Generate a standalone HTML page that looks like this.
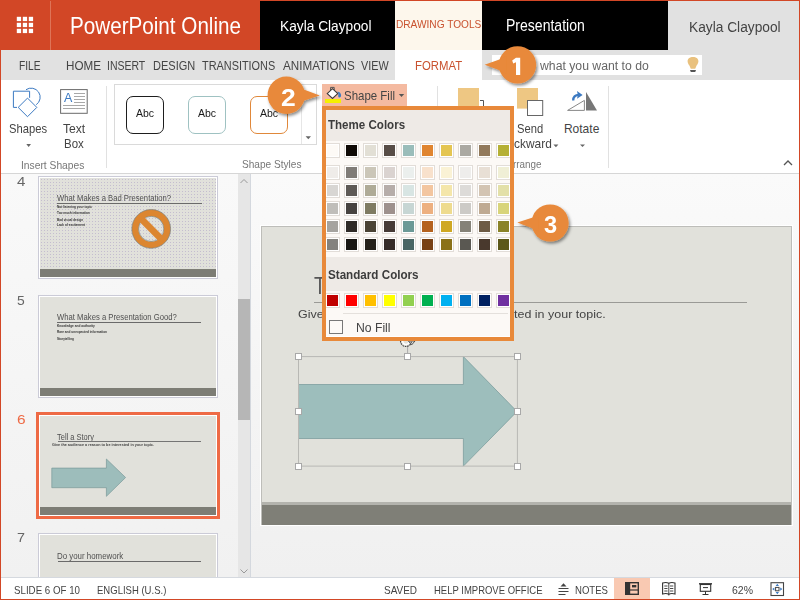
<!DOCTYPE html>
<html><head><meta charset="utf-8">
<style>
*{box-sizing:border-box;margin:0;padding:0}
html,body{width:800px;height:600px;overflow:hidden;background:#fff}
body{position:relative;font-family:"Liberation Sans",sans-serif}
.a{position:absolute}
.t{position:absolute;white-space:nowrap;line-height:1;transform-origin:0 0}
svg{position:absolute;overflow:visible}
.dot{background-color:#E2E1DB;background-image:radial-gradient(circle at 1.5px 1.5px,#C4BDCF 0.7px,transparent 1px);background-size:3px 3px}
</style></head><body>
<div class="a" style="left:0px;top:0px;width:260px;height:50px;background:#D24726;"></div>
<div class="a" style="left:50px;top:1px;width:1px;height:49px;background:#DE7458;"></div>
<svg style="left:16px;top:16px" width="18" height="18"><g fill="#fff"><rect x="0.8" y="0.8" width="4.3" height="4.3"/><rect x="0.8" y="6.8" width="4.3" height="4.3"/><rect x="0.8" y="12.8" width="4.3" height="4.3"/><rect x="6.8" y="0.8" width="4.3" height="4.3"/><rect x="6.8" y="6.8" width="4.3" height="4.3"/><rect x="6.8" y="12.8" width="4.3" height="4.3"/><rect x="12.8" y="0.8" width="4.3" height="4.3"/><rect x="12.8" y="6.8" width="4.3" height="4.3"/><rect x="12.8" y="12.8" width="4.3" height="4.3"/></g></svg>
<div class="t" style="left:70.35px;top:14.84px;font-size:23.19px;color:#fff;transform:scaleX(0.8905);">PowerPoint Online</div>
<div class="a" style="left:260px;top:0px;width:135px;height:50px;background:#000;"></div>
<div class="t" style="left:279.90px;top:19.21px;font-size:14.49px;color:#fff;transform:scaleX(0.9475);">Kayla Claypool</div>
<div class="a" style="left:395px;top:0px;width:87px;height:50px;background:#FDF7EC;"></div>
<div class="t" style="left:395.69px;top:18.78px;font-size:10.87px;color:#C9522F;transform:scaleX(0.9322);">DRAWING TOOLS</div>
<div class="a" style="left:482px;top:0px;width:186px;height:50px;background:#000;"></div>
<div class="t" style="left:506.28px;top:18.23px;font-size:15.65px;color:#fff;transform:scaleX(0.8970);">Presentation</div>
<div class="a" style="left:668px;top:0px;width:132px;height:50px;background:#E1E1E1;"></div>
<div class="t" style="left:689.30px;top:18.60px;font-size:15.22px;color:#444;transform:scaleX(0.9024);">Kayla Claypool</div>
<div class="a" style="left:0px;top:50px;width:800px;height:30px;background:#E1E1E1;"></div>
<div class="a" style="left:395px;top:50px;width:87px;height:30px;background:#fff;"></div>
<div class="t" style="left:19.48px;top:59.44px;font-size:13.04px;color:#444;transform:scaleX(0.7821);">FILE</div>
<div class="t" style="left:66.47px;top:59.44px;font-size:13.04px;color:#444;transform:scaleX(0.8944);">HOME</div>
<div class="t" style="left:107.46px;top:59.44px;font-size:13.04px;color:#444;transform:scaleX(0.8035);">INSERT</div>
<div class="t" style="left:152.52px;top:59.44px;font-size:13.04px;color:#444;transform:scaleX(0.8460);">DESIGN</div>
<div class="t" style="left:201.78px;top:59.44px;font-size:13.04px;color:#444;transform:scaleX(0.8352);">TRANSITIONS</div>
<div class="t" style="left:282.50px;top:59.44px;font-size:13.04px;color:#444;transform:scaleX(0.8955);">ANIMATIONS</div>
<div class="t" style="left:361.20px;top:59.44px;font-size:13.04px;color:#444;transform:scaleX(0.8284);">VIEW</div>
<div class="t" style="left:414.59px;top:59.74px;font-size:12.39px;color:#C9522F;transform:scaleX(0.9177);">FORMAT</div>
<div class="a" style="left:492px;top:55px;width:210px;height:20px;background:#fff;"></div>
<div class="t" style="left:539.60px;top:59.91px;font-size:12.61px;color:#666;transform:scaleX(0.9700);">what you want to do</div>
<svg style="left:0;top:0" width="800" height="600"><path d="M690.8 68.7 L695.2 68.7 L696.6 65.5 C697.8 64 698.4 62.6 698.4 61.2 C698.4 58.6 696.2 57 693 57 C689.8 57 687.6 58.6 687.6 61.2 C687.6 62.6 688.2 64 689.4 65.5 Z" fill="#E9C17E"/><path d="M690 70 L696 70 L695.2 72 L690.8 72 Z" fill="#555"/></svg>
<div class="a" style="left:0px;top:173px;width:800px;height:1px;background:#D6D6D6;"></div>
<svg style="left:0;top:0" width="800" height="600"><g fill="none" stroke="#3C7AC2" stroke-width="1"><path d="M29.6 97.8 V91.2 H13.4 V107.4 H17"/><path d="M26 89.7 A9 9 0 1 1 36.2 104.7"/><path d="M27.5 98.1 L36.8 107.4 L27.5 116.7 L18.2 107.4 Z"/></g></svg>
<div class="t" style="left:8.90px;top:122.80px;font-size:12.32px;color:#444;transform:scaleX(0.9099);">Shapes</div>
<svg style="left:0;top:0" width="800" height="600"><path d="M26.3 144 H31 L28.65 147 Z" fill="#666"/></svg>
<svg style="left:0;top:0" width="800" height="600"><rect x="60.6" y="89.6" width="26.6" height="23.7" fill="#fff" stroke="#6A6A6A" stroke-width="1"/><g stroke="#A8A8A8" stroke-width="1"><path d="M74 93.5 H85 M74 96.5 H85 M74 99.5 H85 M74 102.5 H85 M63 105.5 H85 M63 108.5 H85"/></g></svg>
<div class="t" style="left:63.90px;top:91.22px;font-size:13.19px;color:#3C7AC2;transform:scaleX(0.9464);">A</div>
<div class="t" style="left:62.86px;top:122.80px;font-size:12.32px;color:#444;transform:scaleX(0.9849);">Text</div>
<div class="t" style="left:63.83px;top:137.75px;font-size:12.68px;color:#444;transform:scaleX(0.9043);">Box</div>
<div class="t" style="left:20.98px;top:159.81px;font-size:11.30px;color:#777;transform:scaleX(0.9088);">Insert Shapes</div>
<div class="a" style="left:106px;top:86px;width:1px;height:82px;background:#E1E1E1;"></div>
<div class="a" style="left:114px;top:84px;width:203px;height:61px;border:1px solid #DADADA"></div>
<div class="a" style="left:301px;top:85px;width:1px;height:59px;background:#E6E6E6;"></div>
<svg style="left:0;top:0" width="800" height="600"><path d="M305.6 136.3 H311 L308.3 139.3 Z" fill="#666"/></svg>
<div class="a" style="left:126px;top:96px;width:38px;height:38px;border:1.6px solid #1E1E1E;border-radius:7px"></div>
<div class="a" style="left:188px;top:96px;width:38px;height:38px;border:1.5px solid #9FC2C2;border-radius:7px"></div>
<div class="a" style="left:250px;top:96px;width:38px;height:38px;border:1.5px solid #E0883A;border-radius:7px"></div>
<div class="t" style="left:136.20px;top:108.08px;font-size:10.87px;color:#1a1a1a;transform:scaleX(0.9687);">Abc</div>
<div class="t" style="left:198.10px;top:108.08px;font-size:10.87px;color:#1a1a1a;transform:scaleX(0.9687);">Abc</div>
<div class="t" style="left:260.10px;top:108.08px;font-size:10.87px;color:#1a1a1a;transform:scaleX(0.9687);">Abc</div>
<div class="t" style="left:242.25px;top:159.39px;font-size:11.45px;color:#777;transform:scaleX(0.8817);">Shape Styles</div>
<div class="a" style="left:322px;top:84px;width:85px;height:22px;background:#F4BAA1;"></div>
<svg style="left:0;top:0" width="800" height="600"><path d="M330.6 91.5 V87.4 H334.2 V90.5" fill="none" stroke="#555" stroke-width="1"/><path d="M327.2 93.6 L332.5 88.7 L337.8 93.6 L332.5 98.5 Z" fill="#fff" stroke="#3a3a3a" stroke-width="1.1"/><path d="M337.4 91.6 C339.6 91.8 341.1 93.6 341.1 95.6 C341.1 96.9 340.3 97.6 339.5 97.6 C338.6 97.6 338.2 96.9 338.2 96.1 L338.4 93.6 Z" fill="#3C7AC2"/><rect x="325" y="99" width="16" height="4" fill="#F5F000"/><path d="M398.8 94 H404.2 L401.5 97 Z" fill="#555"/></svg>
<div class="t" style="left:343.98px;top:89.44px;font-size:13.04px;color:#444;transform:scaleX(0.8799);">Shape Fill</div>
<div class="a" style="left:437px;top:86px;width:1px;height:82px;background:#E1E1E1;"></div>
<svg style="left:0;top:0" width="800" height="600"><rect x="458" y="88" width="21" height="21" fill="#EEC783"/><path d="M480 100.5 H483.5 V106" fill="none" stroke="#555" stroke-width="1"/><rect x="517" y="88" width="21" height="20.6" fill="#EEC783"/><rect x="527.5" y="100.5" width="15.2" height="15" fill="#fff" stroke="#666" stroke-width="1"/><path d="M567.6 110.4 L584.4 100.4 L584.4 110.4 Z" fill="#fff" stroke="#888" stroke-width="1"/><path d="M586 92 L586 110.4 L597 110.4 Z" fill="#777"/><path d="M573.2 100.6 C573.2 96.8 575.2 94.9 579 94.9" fill="none" stroke="#3C7AC2" stroke-width="2.3"/><path d="M577 90.9 L582.6 94.9 L577 98.8 L577.8 94.9 Z" fill="#3C7AC2"/><path d="M553.4 144.6 H558.4 L555.9 147.2 Z" fill="#666"/><path d="M580 144.5 H585 L582.5 147 Z" fill="#666"/><path d="M784 165 L788 161 L792 165" fill="none" stroke="#555" stroke-width="1.3"/></svg>
<div class="t" style="left:517.10px;top:123.30px;font-size:12.03px;color:#444;transform:scaleX(0.9303);">Send</div>
<div class="t" style="left:513.52px;top:138.35px;font-size:12.32px;color:#444;transform:scaleX(0.9683);">ckward</div>
<div class="t" style="left:563.93px;top:123.30px;font-size:12.03px;color:#444;">Rotate</div>
<div class="t" style="left:513.06px;top:160.40px;font-size:10.14px;color:#777;transform:scaleX(0.9733);">rrange</div>
<div class="a" style="left:608px;top:86px;width:1px;height:82px;background:#E1E1E1;"></div>
<div class="a" style="left:1px;top:174px;width:237px;height:403px;background:linear-gradient(#F9F9F9,#F1F1F1);"></div>
<div class="a" style="left:238px;top:174px;width:12px;height:403px;background:#E6E6E6;"></div>
<div class="a" style="left:238px;top:299px;width:12px;height:121px;background:#B6B6B6;"></div>
<div class="a" style="left:250px;top:174px;width:1px;height:403px;background:#D4D8DE;"></div>
<svg style="left:0;top:0" width="800" height="600"><g fill="none" stroke="#999" stroke-width="1"><path d="M240.5 183 L244 179.5 L247.5 183"/><path d="M240.5 569.5 L244 573 L247.5 569.5"/></g></svg>
<div class="t" style="left:17.00px;top:175.53px;font-size:12.46px;color:#666;transform:scaleX(1.2114);">4</div>
<div class="t" style="left:17.24px;top:294.44px;font-size:13.04px;color:#666;transform:scaleX(1.0653);">5</div>
<div class="t" style="left:17.03px;top:412.79px;font-size:13.33px;color:#EE6A45;transform:scaleX(1.1613);">6</div>
<div class="t" style="left:17.19px;top:532.28px;font-size:12.75px;color:#666;transform:scaleX(1.1201);">7</div>
<div class="a" style="left:38px;top:176px;width:180px;height:103px;border:1px solid #CBCBD7;border-bottom-width:1px;background:#fff"></div>
<div class="a dot" style="left:40px;top:178px;width:176px;height:99px;background-color:#E1E1DB"></div>
<div class="a" style="left:40px;top:269px;width:176px;height:8px;background:#7D7D75;"></div>
<div class="a" style="left:38px;top:295px;width:180px;height:103px;border:1px solid #CBCBD7;border-bottom-width:1px;background:#fff"></div>
<div class="a" style="left:40px;top:297px;width:176px;height:99px;background-color:#E1E1DB"></div>
<div class="a" style="left:40px;top:388px;width:176px;height:8px;background:#7D7D75;"></div>
<div class="a" style="left:36px;top:412px;width:184px;height:107px;border:3px solid #EE6A45;background:#fff"></div>
<div class="a" style="left:40px;top:416px;width:176px;height:99px;background-color:#E1E1DB"></div>
<div class="a" style="left:40px;top:507px;width:176px;height:8px;background:#7D7D75;"></div>
<div class="a" style="left:38px;top:533px;width:180px;height:44px;border:1px solid #CBCBD7;border-bottom-width:0px;background:#fff"></div>
<div class="a" style="left:40px;top:535px;width:176px;height:42px;background-color:#E1E1DB"></div>
<div class="t" style="left:57.26px;top:194.27px;font-size:8.41px;color:#505050;transform:scaleX(0.9114);">What Makes a Bad Presentation?</div>
<div class="a" style="left:57.3px;top:203px;width:144.5px;height:1px;background:#6A6A6A;"></div>
<div class="t" style="left:57.10px;top:205.80px;font-size:3.19px;color:#333;font-weight:bold;transform:scaleX(0.9831);">Not listening your topic</div>
<div class="t" style="left:57.27px;top:211.80px;font-size:3.19px;color:#333;font-weight:bold;transform:scaleX(0.9792);">Too much information</div>
<div class="t" style="left:57.10px;top:218.80px;font-size:3.19px;color:#333;font-weight:bold;transform:scaleX(0.9624);">Bad visual design</div>
<div class="t" style="left:57.10px;top:224.00px;font-size:3.19px;color:#333;font-weight:bold;transform:scaleX(0.9734);">Lack of excitement</div>
<svg style="left:0;top:0" width="800" height="600"><circle cx="151.2" cy="228.9" r="16" fill="none" stroke="#DC8630" stroke-width="6.6"/><circle cx="151.2" cy="228.9" r="19.4" fill="none" stroke="#6E7A7C" stroke-width="0.6"/><circle cx="151.2" cy="228.9" r="12.6" fill="none" stroke="#6E7A7C" stroke-width="0.6"/><path d="M142 219.7 L160.4 238.1" stroke="#DC8630" stroke-width="6.6"/></svg>
<div class="t" style="left:57.36px;top:313.13px;font-size:8.70px;color:#505050;transform:scaleX(0.8859);">What Makes a Presentation Good?</div>
<div class="a" style="left:57.4px;top:322px;width:143.6px;height:1px;background:#6A6A6A;"></div>
<div class="t" style="left:57.19px;top:325.00px;font-size:3.19px;color:#333;font-weight:bold;transform:scaleX(0.9931);">Knowledge and authority</div>
<div class="t" style="left:57.20px;top:331.00px;font-size:3.19px;color:#333;font-weight:bold;transform:scaleX(0.9868);">Rare and unexpected information</div>
<div class="t" style="left:57.31px;top:338.30px;font-size:3.19px;color:#333;font-weight:bold;transform:scaleX(0.9632);">Storytelling</div>
<div class="t" style="left:57.35px;top:432.57px;font-size:8.41px;color:#505050;transform:scaleX(0.8889);">Tell a Story</div>
<div class="a" style="left:57.5px;top:441px;width:143.8px;height:1px;background:#757575;"></div>
<div class="t" style="left:51.85px;top:444.15px;font-size:3.48px;color:#444;font-weight:bold;transform:scaleX(1.0792);">Give the audience a reason to be interested in your topic.</div>
<svg style="left:0;top:0" width="800" height="600"><path d="M51.8 468.1 H106.4 V459 L125.6 477.5 L106.4 496.3 V487.7 H51.8 Z" fill="#9DBDBB" stroke="#7A9A9A" stroke-width="0.7"/></svg>
<div class="t" style="left:57.17px;top:551.41px;font-size:9.42px;color:#505050;transform:scaleX(0.8393);">Do your homework</div>
<div class="a" style="left:57.8px;top:560.5px;width:143.7px;height:1px;background:#6A6A6A;"></div>
<div class="a" style="left:251px;top:174px;width:549px;height:403px;background:linear-gradient(#FAFAFA,#F0F0F0);"></div>
<div class="a" style="left:260px;top:225px;width:533px;height:301px;border:1px solid #fff"></div>
<div class="a" style="left:261px;top:226px;width:531px;height:299px;border:1px solid #BDBDB9;background:#E1E1DB"></div>
<div class="a" style="left:262px;top:502px;width:529px;height:2.5px;background:#B3B3AD;"></div>
<div class="a" style="left:262px;top:504.5px;width:529px;height:20.5px;background:#7F7F77;"></div>
<div class="t" style="left:313.51px;top:273.53px;font-size:24.49px;color:#555;transform:scaleX(0.7951);">T</div>
<div class="a" style="left:313.9px;top:302px;width:432.8px;height:1px;background:#9A9A96;"></div>
<div class="t" style="left:514.11px;top:308.86px;font-size:11.01px;color:#444;transform:scaleX(1.1352);">ted in your topic.</div>
<div class="t" style="left:297.87px;top:308.86px;font-size:11.01px;color:#444;transform:scaleX(1.1352);">Give the audience a reason to be</div>
<svg style="left:0;top:0" width="800" height="600"><path d="M298.5 384.5 H463.4 V356.6 L517 411.5 L463.4 466.1 V438.5 H298.5 Z" fill="#9DBEBC" stroke="#7D9E9E" stroke-width="0.8"/><rect x="298.5" y="356.6" width="218.9" height="109.5" fill="none" stroke="#B8B8B4" stroke-width="1"/><path d="M407.6 347 V353" stroke="#AAA" stroke-width="1"/><path d="M400.5 341 A5.5 5.5 0 0 0 411.5 341" fill="none" stroke="#444" stroke-width="1.1" stroke-dasharray="1.6 0.8"/><path d="M402.6 341 A3.4 3.4 0 0 0 409.4 341" fill="none" stroke="#fff" stroke-width="1.4"/><path d="M408.5 341 L415 341 L411.5 345 Z" fill="none" stroke="#444" stroke-width="0.9"/></svg>
<div class="a" style="left:295.0px;top:353.1px;width:7px;height:7px;background:#fff;border:1px solid #A8A8A8"></div>
<div class="a" style="left:295.0px;top:408.0px;width:7px;height:7px;background:#fff;border:1px solid #A8A8A8"></div>
<div class="a" style="left:295.0px;top:462.6px;width:7px;height:7px;background:#fff;border:1px solid #A8A8A8"></div>
<div class="a" style="left:404.1px;top:353.1px;width:7px;height:7px;background:#fff;border:1px solid #A8A8A8"></div>
<div class="a" style="left:404.1px;top:462.6px;width:7px;height:7px;background:#fff;border:1px solid #A8A8A8"></div>
<div class="a" style="left:513.9px;top:353.1px;width:7px;height:7px;background:#fff;border:1px solid #A8A8A8"></div>
<div class="a" style="left:513.9px;top:408.0px;width:7px;height:7px;background:#fff;border:1px solid #A8A8A8"></div>
<div class="a" style="left:513.9px;top:462.6px;width:7px;height:7px;background:#fff;border:1px solid #A8A8A8"></div>
<div class="a" style="left:322px;top:106px;width:192px;height:235px;border:4px solid #E8893A;background:#FCF9F6;overflow:hidden"><div class="a" style="left:0px;top:0px;width:184px;height:31px;background:#EEEAE6;"></div>
<div class="a" style="left:0px;top:147px;width:184px;height:34px;background:#EEEAE6;"></div>
<div class="a" style="left:-1px;top:33px;width:15px;height:15px;border:1px solid #E2DDD8;background:#fff;padding:1px"><div style="width:11px;height:11px;background:#FDFAF6"></div></div><div class="a" style="left:18px;top:33px;width:15px;height:15px;border:1px solid #E2DDD8;background:#fff;padding:1px"><div style="width:11px;height:11px;background:#0F0A06"></div></div><div class="a" style="left:37px;top:33px;width:15px;height:15px;border:1px solid #E2DDD8;background:#fff;padding:1px"><div style="width:11px;height:11px;background:#E2DFD5"></div></div><div class="a" style="left:56px;top:33px;width:15px;height:15px;border:1px solid #E2DDD8;background:#fff;padding:1px"><div style="width:11px;height:11px;background:#574D47"></div></div><div class="a" style="left:75px;top:33px;width:15px;height:15px;border:1px solid #E2DDD8;background:#fff;padding:1px"><div style="width:11px;height:11px;background:#9ABDBA"></div></div><div class="a" style="left:94px;top:33px;width:15px;height:15px;border:1px solid #E2DDD8;background:#fff;padding:1px"><div style="width:11px;height:11px;background:#E08530"></div></div><div class="a" style="left:113px;top:33px;width:15px;height:15px;border:1px solid #E2DDD8;background:#fff;padding:1px"><div style="width:11px;height:11px;background:#E4C551"></div></div><div class="a" style="left:132px;top:33px;width:15px;height:15px;border:1px solid #E2DDD8;background:#fff;padding:1px"><div style="width:11px;height:11px;background:#ABA9A2"></div></div><div class="a" style="left:151px;top:33px;width:15px;height:15px;border:1px solid #E2DDD8;background:#fff;padding:1px"><div style="width:11px;height:11px;background:#927A5C"></div></div><div class="a" style="left:170px;top:33px;width:15px;height:15px;border:1px solid #E2DDD8;background:#fff;padding:1px"><div style="width:11px;height:11px;background:#B5B035"></div></div><div class="a" style="left:-1px;top:55px;width:15px;height:15px;border:1px solid #E2DDD8;background:#fff;padding:1px"><div style="width:11px;height:11px;background:#EFECE9"></div></div><div class="a" style="left:18px;top:55px;width:15px;height:15px;border:1px solid #E2DDD8;background:#fff;padding:1px"><div style="width:11px;height:11px;background:#807C77"></div></div><div class="a" style="left:37px;top:55px;width:15px;height:15px;border:1px solid #E2DDD8;background:#fff;padding:1px"><div style="width:11px;height:11px;background:#CBC6B8"></div></div><div class="a" style="left:56px;top:55px;width:15px;height:15px;border:1px solid #E2DDD8;background:#fff;padding:1px"><div style="width:11px;height:11px;background:#DAD3D0"></div></div><div class="a" style="left:75px;top:55px;width:15px;height:15px;border:1px solid #E2DDD8;background:#fff;padding:1px"><div style="width:11px;height:11px;background:#EBEFED"></div></div><div class="a" style="left:94px;top:55px;width:15px;height:15px;border:1px solid #E2DDD8;background:#fff;padding:1px"><div style="width:11px;height:11px;background:#F8E1CC"></div></div><div class="a" style="left:113px;top:55px;width:15px;height:15px;border:1px solid #E2DDD8;background:#fff;padding:1px"><div style="width:11px;height:11px;background:#FAF2D5"></div></div><div class="a" style="left:132px;top:55px;width:15px;height:15px;border:1px solid #E2DDD8;background:#fff;padding:1px"><div style="width:11px;height:11px;background:#EEEDEB"></div></div><div class="a" style="left:151px;top:55px;width:15px;height:15px;border:1px solid #E2DDD8;background:#fff;padding:1px"><div style="width:11px;height:11px;background:#E8DFD5"></div></div><div class="a" style="left:170px;top:55px;width:15px;height:15px;border:1px solid #E2DDD8;background:#fff;padding:1px"><div style="width:11px;height:11px;background:#F0EFD6"></div></div><div class="a" style="left:-1px;top:73px;width:15px;height:15px;border:1px solid #E2DDD8;background:#fff;padding:1px"><div style="width:11px;height:11px;background:#D8D6D3"></div></div><div class="a" style="left:18px;top:73px;width:15px;height:15px;border:1px solid #E2DDD8;background:#fff;padding:1px"><div style="width:11px;height:11px;background:#5E5A56"></div></div><div class="a" style="left:37px;top:73px;width:15px;height:15px;border:1px solid #E2DDD8;background:#fff;padding:1px"><div style="width:11px;height:11px;background:#AFAB97"></div></div><div class="a" style="left:56px;top:73px;width:15px;height:15px;border:1px solid #E2DDD8;background:#fff;padding:1px"><div style="width:11px;height:11px;background:#B6ADA9"></div></div><div class="a" style="left:75px;top:73px;width:15px;height:15px;border:1px solid #E2DDD8;background:#fff;padding:1px"><div style="width:11px;height:11px;background:#D8E5E3"></div></div><div class="a" style="left:94px;top:73px;width:15px;height:15px;border:1px solid #E2DDD8;background:#fff;padding:1px"><div style="width:11px;height:11px;background:#F3C6A0"></div></div><div class="a" style="left:113px;top:73px;width:15px;height:15px;border:1px solid #E2DDD8;background:#fff;padding:1px"><div style="width:11px;height:11px;background:#F4E6AA"></div></div><div class="a" style="left:132px;top:73px;width:15px;height:15px;border:1px solid #E2DDD8;background:#fff;padding:1px"><div style="width:11px;height:11px;background:#DDDBD8"></div></div><div class="a" style="left:151px;top:73px;width:15px;height:15px;border:1px solid #E2DDD8;background:#fff;padding:1px"><div style="width:11px;height:11px;background:#D3C4B2"></div></div><div class="a" style="left:170px;top:73px;width:15px;height:15px;border:1px solid #E2DDD8;background:#fff;padding:1px"><div style="width:11px;height:11px;background:#E3E0A8"></div></div><div class="a" style="left:-1px;top:91px;width:15px;height:15px;border:1px solid #E2DDD8;background:#fff;padding:1px"><div style="width:11px;height:11px;background:#C0BEBA"></div></div><div class="a" style="left:18px;top:91px;width:15px;height:15px;border:1px solid #E2DDD8;background:#fff;padding:1px"><div style="width:11px;height:11px;background:#474340"></div></div><div class="a" style="left:37px;top:91px;width:15px;height:15px;border:1px solid #E2DDD8;background:#fff;padding:1px"><div style="width:11px;height:11px;background:#7F7B62"></div></div><div class="a" style="left:56px;top:91px;width:15px;height:15px;border:1px solid #E2DDD8;background:#fff;padding:1px"><div style="width:11px;height:11px;background:#9E918D"></div></div><div class="a" style="left:75px;top:91px;width:15px;height:15px;border:1px solid #E2DDD8;background:#fff;padding:1px"><div style="width:11px;height:11px;background:#C7D6D4"></div></div><div class="a" style="left:94px;top:91px;width:15px;height:15px;border:1px solid #E2DDD8;background:#fff;padding:1px"><div style="width:11px;height:11px;background:#EDB080"></div></div><div class="a" style="left:113px;top:91px;width:15px;height:15px;border:1px solid #E2DDD8;background:#fff;padding:1px"><div style="width:11px;height:11px;background:#EEDB8E"></div></div><div class="a" style="left:132px;top:91px;width:15px;height:15px;border:1px solid #E2DDD8;background:#fff;padding:1px"><div style="width:11px;height:11px;background:#CCCAC6"></div></div><div class="a" style="left:151px;top:91px;width:15px;height:15px;border:1px solid #E2DDD8;background:#fff;padding:1px"><div style="width:11px;height:11px;background:#BFAA92"></div></div><div class="a" style="left:170px;top:91px;width:15px;height:15px;border:1px solid #E2DDD8;background:#fff;padding:1px"><div style="width:11px;height:11px;background:#D8D47A"></div></div><div class="a" style="left:-1px;top:109px;width:15px;height:15px;border:1px solid #E2DDD8;background:#fff;padding:1px"><div style="width:11px;height:11px;background:#A5A39F"></div></div><div class="a" style="left:18px;top:109px;width:15px;height:15px;border:1px solid #E2DDD8;background:#fff;padding:1px"><div style="width:11px;height:11px;background:#2F2B28"></div></div><div class="a" style="left:37px;top:109px;width:15px;height:15px;border:1px solid #E2DDD8;background:#fff;padding:1px"><div style="width:11px;height:11px;background:#4A4335"></div></div><div class="a" style="left:56px;top:109px;width:15px;height:15px;border:1px solid #E2DDD8;background:#fff;padding:1px"><div style="width:11px;height:11px;background:#463B37"></div></div><div class="a" style="left:75px;top:109px;width:15px;height:15px;border:1px solid #E2DDD8;background:#fff;padding:1px"><div style="width:11px;height:11px;background:#6B9996"></div></div><div class="a" style="left:94px;top:109px;width:15px;height:15px;border:1px solid #E2DDD8;background:#fff;padding:1px"><div style="width:11px;height:11px;background:#B5621E"></div></div><div class="a" style="left:113px;top:109px;width:15px;height:15px;border:1px solid #E2DDD8;background:#fff;padding:1px"><div style="width:11px;height:11px;background:#CFA823"></div></div><div class="a" style="left:132px;top:109px;width:15px;height:15px;border:1px solid #E2DDD8;background:#fff;padding:1px"><div style="width:11px;height:11px;background:#858278"></div></div><div class="a" style="left:151px;top:109px;width:15px;height:15px;border:1px solid #E2DDD8;background:#fff;padding:1px"><div style="width:11px;height:11px;background:#6D5B45"></div></div><div class="a" style="left:170px;top:109px;width:15px;height:15px;border:1px solid #E2DDD8;background:#fff;padding:1px"><div style="width:11px;height:11px;background:#8A8328"></div></div><div class="a" style="left:-1px;top:127px;width:15px;height:15px;border:1px solid #E2DDD8;background:#fff;padding:1px"><div style="width:11px;height:11px;background:#84827E"></div></div><div class="a" style="left:18px;top:127px;width:15px;height:15px;border:1px solid #E2DDD8;background:#fff;padding:1px"><div style="width:11px;height:11px;background:#181612"></div></div><div class="a" style="left:37px;top:127px;width:15px;height:15px;border:1px solid #E2DDD8;background:#fff;padding:1px"><div style="width:11px;height:11px;background:#25211A"></div></div><div class="a" style="left:56px;top:127px;width:15px;height:15px;border:1px solid #E2DDD8;background:#fff;padding:1px"><div style="width:11px;height:11px;background:#362C28"></div></div><div class="a" style="left:75px;top:127px;width:15px;height:15px;border:1px solid #E2DDD8;background:#fff;padding:1px"><div style="width:11px;height:11px;background:#4A6664"></div></div><div class="a" style="left:94px;top:127px;width:15px;height:15px;border:1px solid #E2DDD8;background:#fff;padding:1px"><div style="width:11px;height:11px;background:#784114"></div></div><div class="a" style="left:113px;top:127px;width:15px;height:15px;border:1px solid #E2DDD8;background:#fff;padding:1px"><div style="width:11px;height:11px;background:#8A7118"></div></div><div class="a" style="left:132px;top:127px;width:15px;height:15px;border:1px solid #E2DDD8;background:#fff;padding:1px"><div style="width:11px;height:11px;background:#5A5852"></div></div><div class="a" style="left:151px;top:127px;width:15px;height:15px;border:1px solid #E2DDD8;background:#fff;padding:1px"><div style="width:11px;height:11px;background:#49392D"></div></div><div class="a" style="left:170px;top:127px;width:15px;height:15px;border:1px solid #E2DDD8;background:#fff;padding:1px"><div style="width:11px;height:11px;background:#5C5819"></div></div><div class="a" style="left:-1px;top:183px;width:15px;height:15px;border:1px solid #E2DDD8;background:#fff;padding:1px"><div style="width:11px;height:11px;background:#C00000"></div></div><div class="a" style="left:18px;top:183px;width:15px;height:15px;border:1px solid #E2DDD8;background:#fff;padding:1px"><div style="width:11px;height:11px;background:#FF0000"></div></div><div class="a" style="left:37px;top:183px;width:15px;height:15px;border:1px solid #E2DDD8;background:#fff;padding:1px"><div style="width:11px;height:11px;background:#FFC000"></div></div><div class="a" style="left:56px;top:183px;width:15px;height:15px;border:1px solid #E2DDD8;background:#fff;padding:1px"><div style="width:11px;height:11px;background:#FFFF00"></div></div><div class="a" style="left:75px;top:183px;width:15px;height:15px;border:1px solid #E2DDD8;background:#fff;padding:1px"><div style="width:11px;height:11px;background:#92D050"></div></div><div class="a" style="left:94px;top:183px;width:15px;height:15px;border:1px solid #E2DDD8;background:#fff;padding:1px"><div style="width:11px;height:11px;background:#00B050"></div></div><div class="a" style="left:113px;top:183px;width:15px;height:15px;border:1px solid #E2DDD8;background:#fff;padding:1px"><div style="width:11px;height:11px;background:#00B0F0"></div></div><div class="a" style="left:132px;top:183px;width:15px;height:15px;border:1px solid #E2DDD8;background:#fff;padding:1px"><div style="width:11px;height:11px;background:#0070C0"></div></div><div class="a" style="left:151px;top:183px;width:15px;height:15px;border:1px solid #E2DDD8;background:#fff;padding:1px"><div style="width:11px;height:11px;background:#002060"></div></div><div class="a" style="left:170px;top:183px;width:15px;height:15px;border:1px solid #E2DDD8;background:#fff;padding:1px"><div style="width:11px;height:11px;background:#7030A0"></div></div><div class="a" style="left:17px;top:203px;width:165px;height:1px;background:#E4E0DC;"></div>
<div class="a" style="left:0px;top:226px;width:184px;height:1px;background:#fff;"></div>
<div class="a" style="left:3px;top:210px;width:14px;height:14px;border:1px solid #777;background:transparent"></div></div>
<div class="t" style="left:328.38px;top:118.95px;font-size:12.32px;color:#3C3C3C;font-weight:bold;transform:scaleX(0.9388);">Theme Colors</div>
<div class="t" style="left:327.65px;top:268.71px;font-size:12.61px;color:#3C3C3C;font-weight:bold;transform:scaleX(0.9237);">Standard Colors</div>
<div class="t" style="left:355.77px;top:321.44px;font-size:13.04px;color:#444;transform:scaleX(0.9351);">No Fill</div>
<svg style="left:0;top:0" width="800" height="600"><defs><filter id="sh1" x="-50%" y="-50%" width="200%" height="200%"><feDropShadow dx="1.5" dy="2" stdDeviation="1.5" flood-color="#000" flood-opacity="0.45"/></filter></defs><g filter="url(#sh1)" fill="#E8893A"><circle cx="517.5" cy="64.9" r="18.7"/><path d="M484.6 64.7 L500.1 59.3 Q500.1 58.1 506.2 56.4 L506.2 73.4 Q500.1 71.7 500.1 70.5 Z"/></g></svg>
<svg style="left:0;top:0" width="800" height="600"><path d="M516 57.8 H520.2 V74.9 H516 V62.3 L513.2 63.4 L512.2 60.5 Z" fill="#fff"/></svg>
<svg style="left:0;top:0" width="800" height="600"><defs><filter id="sh2" x="-50%" y="-50%" width="200%" height="200%"><feDropShadow dx="1.5" dy="2" stdDeviation="1.5" flood-color="#000" flood-opacity="0.45"/></filter></defs><g filter="url(#sh2)" fill="#E8893A"><circle cx="286.3" cy="95.2" r="18.7"/><path d="M319.8 95.5 L303.7 89.6 Q303.7 88.4 297.5 86.7 L297.5 103.7 Q303.7 102.0 303.7 100.8 Z"/></g></svg>
<div class="t" style="left:280.87px;top:86.22px;font-size:23.91px;color:#fff;font-weight:bold;transform:scaleX(1.1064);">2</div>
<svg style="left:0;top:0" width="800" height="600"><defs><filter id="sh3" x="-50%" y="-50%" width="200%" height="200%"><feDropShadow dx="1.5" dy="2" stdDeviation="1.5" flood-color="#000" flood-opacity="0.45"/></filter></defs><g filter="url(#sh3)" fill="#E8893A"><circle cx="550.1" cy="223.0" r="18.6"/><path d="M517.3 222.5 L532.8 217.4 Q532.8 216.2 538.9 214.5 L538.9 231.5 Q532.8 229.8 532.8 228.6 Z"/></g></svg>
<div class="t" style="left:543.51px;top:213.02px;font-size:23.91px;color:#fff;font-weight:bold;transform:scaleX(0.9884);">3</div>
<div class="a" style="left:0px;top:577px;width:800px;height:1px;background:#D5D9DF;"></div>
<div class="t" style="left:13.81px;top:584.79px;font-size:11.45px;color:#444;transform:scaleX(0.8506);">SLIDE 6 OF 10</div>
<div class="t" style="left:97.44px;top:584.79px;font-size:11.45px;color:#444;transform:scaleX(0.8324);">ENGLISH (U.S.)</div>
<div class="t" style="left:383.55px;top:584.99px;font-size:11.45px;color:#444;transform:scaleX(0.8721);">SAVED</div>
<div class="t" style="left:433.84px;top:584.99px;font-size:11.45px;color:#444;transform:scaleX(0.8298);">HELP IMPROVE OFFICE</div>
<div class="t" style="left:575.23px;top:584.71px;font-size:11.30px;color:#444;transform:scaleX(0.8473);">NOTES</div>
<div class="t" style="left:732.38px;top:584.97px;font-size:11.59px;color:#444;transform:scaleX(0.9053);">62%</div>
<div class="a" style="left:614px;top:578px;width:36px;height:21px;background:#F9C9B2;"></div>
<svg style="left:0;top:0" width="800" height="600"><path d="M560.5 586.5 L563.5 583.3 L566.5 586.5 Z" fill="#444"/><path d="M558.5 588.5 H568.5 M558.5 591.5 H568.5 M558.5 594.5 H565.5" stroke="#444" stroke-width="1"/><rect x="625.7" y="582.7" width="12.6" height="11.6" fill="none" stroke="#333" stroke-width="1.4"/><rect x="625.7" y="582.7" width="4.5" height="11.6" fill="#333"/><path d="M630 590 H638" stroke="#333" stroke-width="1.2"/><rect x="632" y="585" width="4.3" height="2.4" fill="#333"/><path d="M662.6 583 C665 582.3 667 582.3 668.8 583.3 C670.6 582.3 672.6 582.3 675 583 V594 C672.6 593.3 670.6 593.3 668.8 594.3 C667 593.3 665 593.3 662.6 594 Z" fill="#fff" stroke="#333" stroke-width="1.1"/><path d="M668.8 583.3 V595.5 M664.3 586 H667.5 M664.3 588.5 H667.5 M664.3 591 H667.5 M670 586 H673.3 M670 588.5 H673.3 M670 591 H673.3" stroke="#333" stroke-width="0.9"/><path d="M699 583.8 H712" stroke="#333" stroke-width="1.4"/><rect x="700.3" y="584.5" width="10.4" height="6.8" fill="none" stroke="#333" stroke-width="1.1"/><path d="M703 587.6 H708 M705.5 591.3 V594.3 M702.5 594.5 H708.5" stroke="#333" stroke-width="1"/><rect x="771" y="582.7" width="12.5" height="12.8" fill="none" stroke="#444" stroke-width="1.1"/><rect x="775.6" y="587.4" width="3.4" height="3.4" fill="none" stroke="#444" stroke-width="1"/><path d="M777.3 583.8 L779 586 H775.6 Z M777.3 594.3 L779 592.1 H775.6 Z M772.2 589.1 L774.4 587.4 V590.8 Z M782.4 589.1 L780.2 587.4 V590.8 Z" fill="#3C7AC2"/></svg>
<div class="a" style="left:0;top:0;width:800px;height:600px;border:1px solid #D24726"></div>
</body></html>
